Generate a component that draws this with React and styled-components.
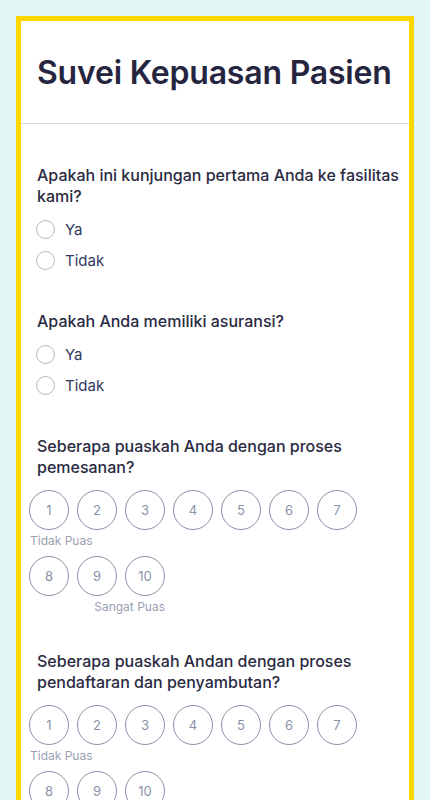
import React from "react";
import styled, { createGlobalStyle } from "styled-components";

const GlobalStyle = createGlobalStyle`
  body {
    margin: 0;
    background: #e2f4f4;
    font-family: Inter, "Noto Sans", sans-serif;
  }
`;

const Page = styled.div`
  padding: 16px;
`;

const Card = styled.div`
  background: #fff;
  border: 5px solid #ffd700;
`;

const Header = styled.header`
  height: 102px;
  display: flex;
  align-items: center;
  padding: 0 0 0 16px;
  border-bottom: 1px solid #d9d9e1;
`;

const Title = styled.h1`
  margin: 0;
  font-size: 32px;
  font-weight: 600;
  color: #25253f;
  white-space: nowrap;
  letter-spacing: -0.2px;
`;

const Body = styled.div`
  padding: 41px 10px 0 16px;
`;

const Question = styled.section`
  margin-bottom: ${(p) => (p.$scale ? "37px" : "39px")};
`;

const QuestionText = styled.h2`
  margin: 0 0 10px;
  font-size: 16px;
  font-weight: 500;
  line-height: 21px;
  color: #2a2a42;
`;

const Options = styled.div`
  display: flex;
  flex-direction: column;
  gap: 7px;
`;

const RadioRow = styled.label`
  display: flex;
  align-items: center;
  height: 24px;
  gap: 10px;
  font-size: 15px;
  color: #2f3a5e;
  margin-left: -1px;
`;

const RadioDot = styled.span`
  width: 17px;
  height: 17px;
  border: 1px solid #b4b9c8;
  border-radius: 50%;
`;

const Scale = styled.div`
  display: flex;
  flex-wrap: wrap;
  gap: 8px;
  margin: 12px 0 0 -8px;
  width: 336px;
`;

const ScaleItem = styled.div`
  display: flex;
  flex-direction: column;
  width: 40px;
`;

const ScaleCircle = styled.button`
  width: 40px;
  height: 40px;
  border: 1px solid #8a91ab;
  border-radius: 50%;
  background: #fff;
  padding: 0;
  font-family: Inter, "Noto Sans", sans-serif;
  font-size: 13px;
  color: #8a93ab;
`;

const Caption = styled.div`
  display: flex;
  justify-content: ${(p) => (p.$end ? "flex-end" : "flex-start")};
  margin: 4px 0 0 ${(p) => (p.$end ? "0" : "1px")};
  height: 14px;
  span {
    white-space: nowrap;
    font-size: 12px;
    line-height: 14px;
    color: #9aa1b3;
  }
`;

const questions = [
  { text: "Apakah ini kunjungan pertama Anda ke fasilitas kami?", type: "radio" },
  { text: "Apakah Anda memiliki asuransi?", type: "radio" },
  { text: "Seberapa puaskah Anda dengan proses pemesanan?", type: "scale" },
  { text: "Seberapa puaskah Andan dengan proses pendaftaran dan penyambutan?", type: "scale" },
];

function RatingScale() {
  const nums = Array.from({ length: 10 }, (_, i) => i + 1);
  return (
    <Scale>
      {nums.map((n) => (
        <ScaleItem key={n}>
          <ScaleCircle type="button">{n}</ScaleCircle>
          {n === 1 && (
            <Caption>
              <span>Tidak Puas</span>
            </Caption>
          )}
          {n === 10 && (
            <Caption $end>
              <span>Sangat Puas</span>
            </Caption>
          )}
        </ScaleItem>
      ))}
    </Scale>
  );
}

export default function App() {
  return (
    <>
      <GlobalStyle />
      <Page>
        <Card>
          <Header>
            <Title>Suvei Kepuasan Pasien</Title>
          </Header>
          <Body>
            {questions.map((q) => (
              <Question key={q.text} $scale={q.type === "scale"}>
                <QuestionText>{q.text}</QuestionText>
                {q.type === "radio" ? (
                  <Options>
                    {["Ya", "Tidak"].map((o) => (
                      <RadioRow key={o}>
                        <RadioDot />
                        {o}
                      </RadioRow>
                    ))}
                  </Options>
                ) : (
                  <RatingScale />
                )}
              </Question>
            ))}
          </Body>
        </Card>
      </Page>
    </>
  );
}
